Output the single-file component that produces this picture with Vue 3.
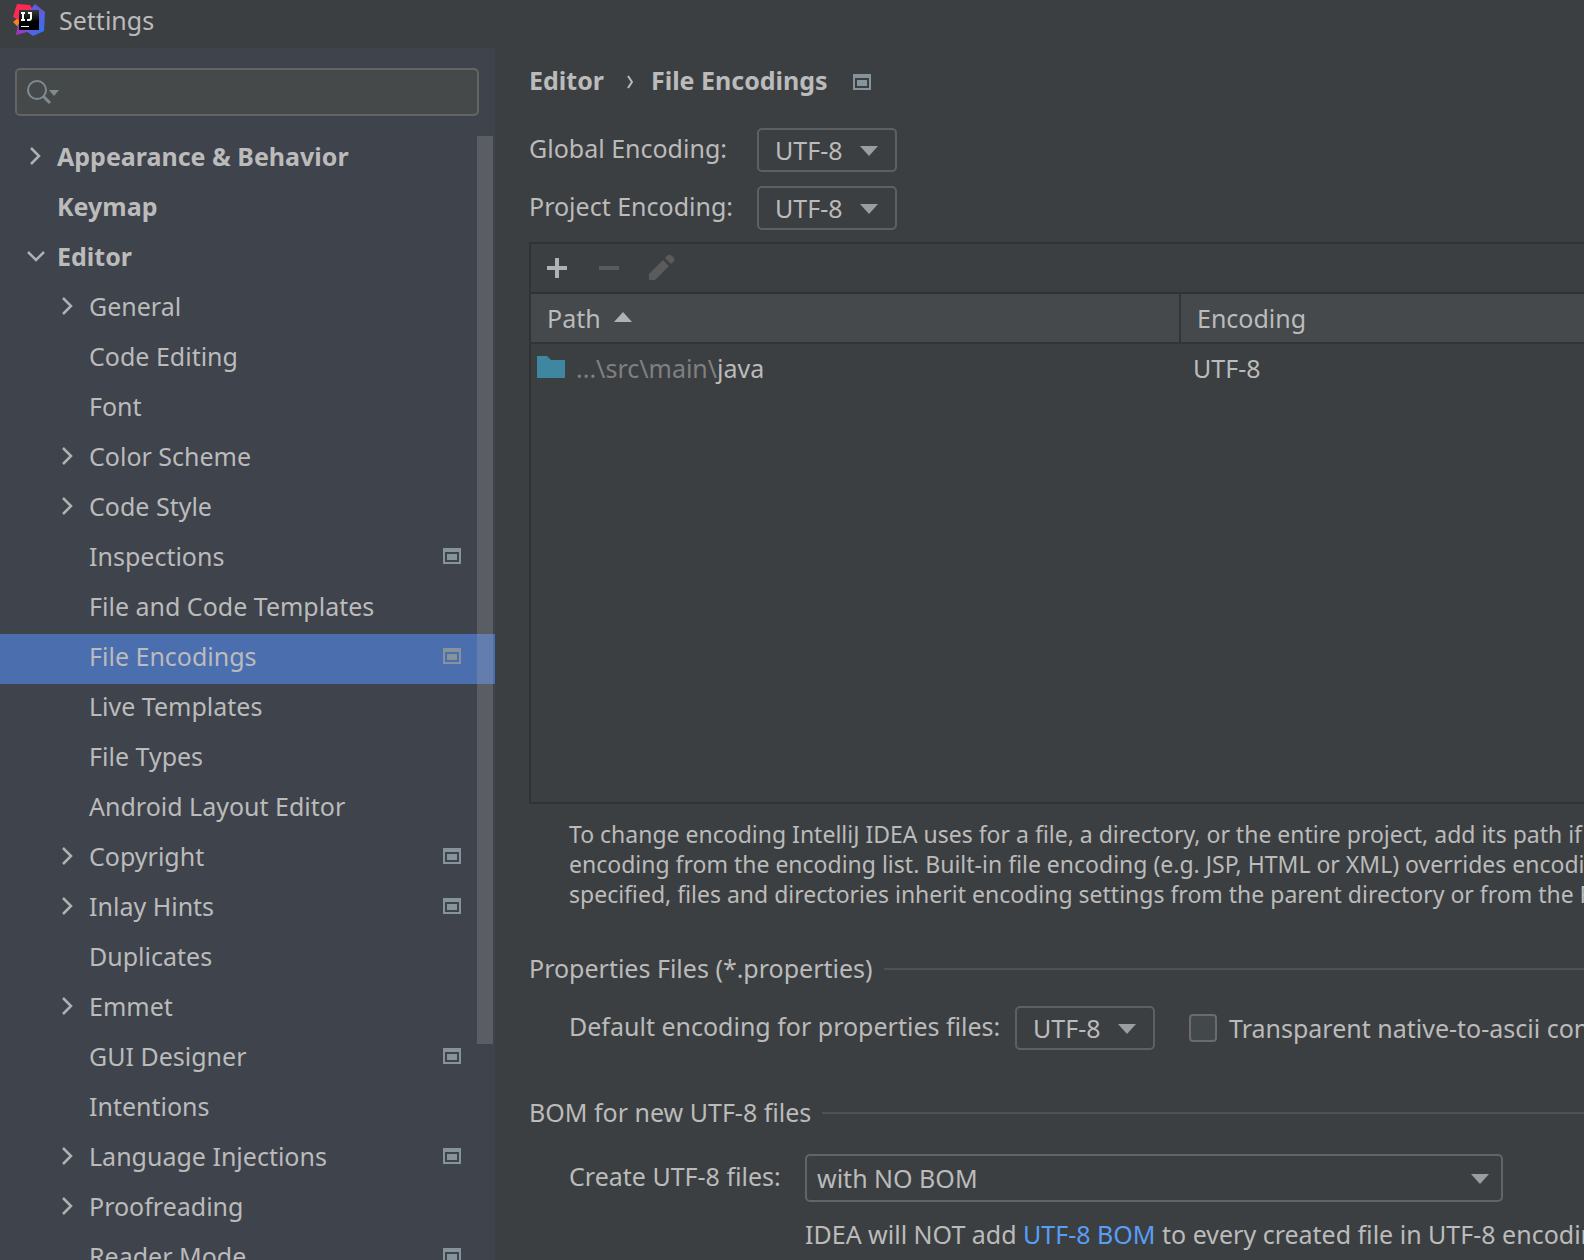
<script setup>
import { ref } from 'vue'

const query = ref('')
const globalEncoding = ref('UTF-8')
const projectEncoding = ref('UTF-8')
const propertiesEncoding = ref('UTF-8')
const bom = ref('with NO BOM')
const transparent = ref(false)
const encodings = ['UTF-8']
const bomOptions = ['with NO BOM']

const selected = ref('File Encodings')
const items = [
  { label: 'Appearance & Behavior', level: 0, arrow: 'closed' },
  { label: 'Keymap', level: 0 },
  { label: 'Editor', level: 0, arrow: 'open' },
  { label: 'General', level: 1, arrow: 'closed' },
  { label: 'Code Editing', level: 1 },
  { label: 'Font', level: 1 },
  { label: 'Color Scheme', level: 1, arrow: 'closed' },
  { label: 'Code Style', level: 1, arrow: 'closed' },
  { label: 'Inspections', level: 1, project: true },
  { label: 'File and Code Templates', level: 1 },
  { label: 'File Encodings', level: 1, project: true },
  { label: 'Live Templates', level: 1 },
  { label: 'File Types', level: 1 },
  { label: 'Android Layout Editor', level: 1 },
  { label: 'Copyright', level: 1, arrow: 'closed', project: true },
  { label: 'Inlay Hints', level: 1, arrow: 'closed', project: true },
  { label: 'Duplicates', level: 1 },
  { label: 'Emmet', level: 1, arrow: 'closed' },
  { label: 'GUI Designer', level: 1, project: true },
  { label: 'Intentions', level: 1 },
  { label: 'Language Injections', level: 1, arrow: 'closed', project: true },
  { label: 'Proofreading', level: 1, arrow: 'closed' },
  { label: 'Reader Mode', level: 1, project: true },
]
</script>

<template>
  <div class="window">
    <header class="titlebar">
      <svg class="logo" viewBox="0 0 32 32" aria-hidden="true">
        <defs>
          <linearGradient id="lg-blue" x1="0" y1="0" x2="1" y2="1">
            <stop offset="0" stop-color="#3b6cf0" />
            <stop offset="0.45" stop-color="#6b57d8" />
            <stop offset="1" stop-color="#1f7cf5" />
          </linearGradient>
          <linearGradient id="lg-purple" x1="0" y1="1" x2="1" y2="0">
            <stop offset="0" stop-color="#b02fb0" />
            <stop offset="1" stop-color="#5c5be0" />
          </linearGradient>
          <linearGradient id="lg-black" x1="0" y1="0" x2="0" y2="1">
            <stop offset="0" stop-color="#3a3a3a" />
            <stop offset="0.6" stop-color="#000" />
          </linearGradient>
        </defs>
        <path d="M0 18 L6 13 L8 24 L4 22Z" fill="#fc801d" />
        <path d="M4 0 L17 1 L21 8 L6 16 L0 13Z" fill="#fe2857" />
        <path d="M3 31 L5 20 L16 24 L14 28Z" fill="url(#lg-purple)" />
        <path d="M22 0 L32 8 L31 27 L20 32 L13 27 L18 5Z" fill="url(#lg-blue)" />
        <rect x="6" y="6" width="20" height="20" fill="url(#lg-black)" />
        <path d="M8 8h4v2h-1v5h1v2H8v-2h1v-5H8zM15 8h4v6q0 3-3 3h-2v-2h2q1 0 1-1v-4h-2zM8 22h8v1H8z" fill="#fff" />
      </svg>
      <h1>Settings</h1>
    </header>

    <div class="body">
      <aside class="sidebar">
        <div class="search">
          <svg viewBox="0 0 34 26" aria-hidden="true">
            <circle cx="10" cy="11" r="9" fill="none" stroke="#7f8b91" stroke-width="2" />
            <path d="M16 17l7 7" stroke="#7f8b91" stroke-width="3" />
            <path d="M22 11h10l-5 6z" fill="#7f8b91" />
          </svg>
          <input v-model="query" type="text" aria-label="Search settings" />
        </div>

        <nav class="tree">
          <ul>
            <li v-for="item in items" :key="item.label">
              <button
                type="button"
                class="node"
                :class="{ child: item.level === 1, selected: item.label === selected }"
                @click="selected = item.label"
              >
                <span class="chevron">
                  <svg v-if="item.arrow === 'closed'" viewBox="0 0 18 18" aria-hidden="true"><path d="M4 1l8 8-8 8" /></svg>
                  <svg v-else-if="item.arrow === 'open'" viewBox="0 0 18 18" aria-hidden="true"><path d="M1 5l8 8 8-8" /></svg>
                </span>
                <span class="name">{{ item.label }}</span>
                <svg v-if="item.project" class="project" viewBox="0 0 18 16" aria-hidden="true">
                  <path fill-rule="evenodd" d="M0 0h18v16H0zM2 4v10h14V4zM4 6h10v6H4z" />
                </svg>
              </button>
            </li>
          </ul>
          <div class="thumb"></div>
        </nav>
      </aside>

      <main class="content">
        <div class="crumbs">
          <span>Editor</span>
          <svg class="sep" viewBox="0 0 6 14" aria-hidden="true"><path d="M1 1l4 6-4 6" /></svg>
          <span>File Encodings</span>
          <svg class="project" viewBox="0 0 18 16" aria-hidden="true">
            <path fill-rule="evenodd" d="M0 0h18v16H0zM2 4v10h14V4zM4 6h10v6H4z" />
          </svg>
        </div>

        <div class="fields">
          <label class="caption" for="global">Global Encoding:</label>
          <div class="combo">
            <select id="global" v-model="globalEncoding"><option v-for="e in encodings" :key="e">{{ e }}</option></select>
            <svg viewBox="0 0 18 10" aria-hidden="true"><path d="M0 0h18l-9 10z" /></svg>
          </div>
          <label class="caption" for="project">Project Encoding:</label>
          <div class="combo">
            <select id="project" v-model="projectEncoding"><option v-for="e in encodings" :key="e">{{ e }}</option></select>
            <svg viewBox="0 0 18 10" aria-hidden="true"><path d="M0 0h18l-9 10z" /></svg>
          </div>
        </div>

        <section class="paths">
          <div class="toolbar">
            <button type="button" aria-label="Add">
              <svg viewBox="0 0 28 28" aria-hidden="true"><path d="M12 4h4v8h8v4h-8v8h-4v-8H4v-4h8z" fill="#afb1b3" /></svg>
            </button>
            <button type="button" aria-label="Remove" disabled>
              <svg viewBox="0 0 28 28" aria-hidden="true"><path d="M4 12h20v4H4z" fill="#5b5b5b" /></svg>
            </button>
            <button type="button" aria-label="Edit" disabled>
              <svg viewBox="0 0 28 28" aria-hidden="true">
                <path d="M2 20L16 6l6 6L8 26H2zM18 4l3-3q2-1 4 1l2 2q1 2 0 3l-3 3z" fill="#5b5b5b" />
              </svg>
            </button>
          </div>
          <table>
            <thead>
              <tr>
                <th class="path-col">
                  Path
                  <svg class="sort" viewBox="0 0 18 10" aria-hidden="true"><path d="M0 10h18l-9-10z" /></svg>
                </th>
                <th>Encoding</th>
              </tr>
            </thead>
            <tbody>
              <tr>
                <td>
                  <svg class="folder" viewBox="0 0 28 22" aria-hidden="true"><path d="M0 0h10l4 4h14v18H0z" /></svg>
                  <span class="dim">...\src\main\</span>java
                </td>
                <td>UTF-8</td>
              </tr>
            </tbody>
          </table>
        </section>

        <p class="help">
          To change encoding IntelliJ IDEA uses for a file, a directory, or the entire project, add its path if necessary<br />
          encoding from the encoding list. Built-in file encoding (e.g. JSP, HTML or XML) overrides encoding<br />
          specified, files and directories inherit encoding settings from the parent directory or from the Project
        </p>

        <h2>Properties Files (*.properties)</h2>
        <div class="row properties">
          <label class="caption" for="properties">Default encoding for properties files:</label>
          <div class="combo">
            <select id="properties" v-model="propertiesEncoding"><option v-for="e in encodings" :key="e">{{ e }}</option></select>
            <svg viewBox="0 0 18 10" aria-hidden="true"><path d="M0 0h18l-9 10z" /></svg>
          </div>
          <label class="check"><input v-model="transparent" type="checkbox" />Transparent native-to-ascii conversion</label>
        </div>

        <h2>BOM for new UTF-8 files</h2>
        <div class="row bom">
          <label class="caption" for="bom">Create UTF-8 files:</label>
          <div class="combo large">
            <select id="bom" v-model="bom"><option v-for="b in bomOptions" :key="b">{{ b }}</option></select>
            <svg viewBox="0 0 18 10" aria-hidden="true"><path d="M0 0h18l-9 10z" /></svg>
          </div>
          <p class="note">IDEA will NOT add <a href="#">UTF-8 BOM</a> to every created file in UTF-8 encoding</p>
        </div>
      </main>
    </div>
  </div>
</template>

<style>
body {
  margin: 0;
  background: #3c3f41;
}
</style>

<style scoped>
.window {
  display: flex;
  flex-direction: column;
  height: 100vh;
  overflow: hidden;
  background: #3c3f41;
  color: #bbbbbb;
  font: 25px/36px "Noto Sans", "Open Sans", sans-serif;
  white-space: nowrap;
}
.window * {
  box-sizing: border-box;
}
svg {
  display: block;
  flex: none;
}
button,
input,
select {
  margin: 0;
  padding: 0;
  border: 0;
  background: none;
  color: inherit;
  font: inherit;
}
h1,
h2,
p,
ul {
  margin: 0;
  padding: 0;
  font-size: inherit;
  font-weight: 400;
}
.titlebar {
  display: flex;
  flex: none;
  align-items: center;
  gap: 14px;
  height: 48px;
  padding: 0 13px 8px;
}
.logo {
  width: 32px;
  height: 32px;
}
.body {
  display: flex;
  flex: 1;
  min-height: 0;
}
.sidebar {
  display: flex;
  flex: none;
  flex-direction: column;
  width: 495px;
  overflow: hidden;
  background: #3f434c;
}
.search {
  display: flex;
  flex: none;
  align-items: center;
  gap: 4px;
  height: 48px;
  margin: 20px 16px 18px 15px;
  padding: 0 10px;
  border: 2px solid #646464;
  border-radius: 5px;
  background: #45494a;
}
.search svg {
  width: 34px;
  height: 26px;
}
.search input {
  flex: 1;
  min-width: 0;
  outline: none;
}
.tree {
  position: relative;
}
.tree ul {
  list-style: none;
}
.node {
  display: flex;
  align-items: center;
  width: 100%;
  height: 50px;
  padding: 0 34px 6px 27px;
  font-weight: 700;
  text-align: left;
}
.node.child {
  padding-left: 59px;
  font-weight: 400;
}
.node.selected {
  background: #4b6eaf;
}
.chevron {
  width: 30px;
}
.chevron svg {
  width: 18px;
  height: 18px;
  fill: none;
  stroke: #afb1b3;
  stroke-width: 2.5;
}
.name {
  flex: 1;
}
.project {
  width: 18px;
  height: 16px;
  fill: #87939a;
}
.thumb {
  position: absolute;
  top: 2px;
  right: 2px;
  width: 16px;
  height: 908px;
  background: rgba(170, 170, 170, 0.26);
}
.content {
  display: flex;
  flex: 1;
  flex-direction: column;
  min-width: 0;
  padding: 16px 0 0 34px;
  overflow: hidden;
}
.crumbs {
  display: flex;
  align-items: center;
  height: 36px;
  margin-bottom: 28px;
  font-weight: 700;
}
.crumbs span,
.caption {
  padding-bottom: 4px;
}
.sep {
  width: 6px;
  height: 14px;
  margin: 0 18px 0 23px;
  fill: none;
  stroke: #bbbbbb;
  stroke-width: 2;
}
.crumbs .project {
  margin-left: 25px;
}
.fields {
  display: grid;
  grid-template-columns: 228px 140px;
  row-gap: 14px;
  align-items: center;
  margin-bottom: 12px;
}
.combo {
  position: relative;
  width: 140px;
}
.combo select {
  display: block;
  width: 100%;
  height: 44px;
  padding-left: 16px;
  border: 2px solid #5e6060;
  border-radius: 5px;
  appearance: none;
  outline: none;
}
.combo option {
  background: #3c3f41;
}
.combo svg {
  position: absolute;
  top: 18px;
  right: 19px;
  width: 18px;
  height: 10px;
  fill: #9a9da1;
  pointer-events: none;
}
.combo.large {
  width: 698px;
}
.combo.large select {
  height: 48px;
  padding-left: 10px;
  border-color: #646464;
}
.combo.large svg {
  top: 20px;
  right: 14px;
}
.paths {
  height: 562px;
  flex: none;
  border: 2px solid #323232;
  border-right: 0;
}
.toolbar {
  display: flex;
  align-items: center;
  gap: 24px;
  height: 50px;
  padding-left: 12px;
  border-bottom: 2px solid #323232;
}
.toolbar svg {
  width: 28px;
  height: 28px;
}
table {
  width: 100%;
  table-layout: fixed;
  border-collapse: separate;
  border-spacing: 0;
}
th,
td {
  height: 50px;
  padding: 0;
  font-weight: 400;
  text-align: left;
}
td {
  height: 48px;
}
thead {
  background: #45494b;
}
th {
  border-bottom: 2px solid #323537;
  padding-left: 16px;
}
th.path-col {
  width: 650px;
  border-right: 2px solid #323537;
}
.sort {
  display: inline-block;
  width: 18px;
  height: 10px;
  margin: 0 0 6px 7px;
  fill: #afb1b3;
}
td {
  padding-left: 12px;
}
td:first-child {
  padding-left: 6px;
}
.folder {
  display: inline-block;
  width: 28px;
  height: 22px;
  margin-right: 7px;
  fill: #3f87a1;
}
.dim {
  margin-left: 4px;
  color: #808080;
}
.help {
  margin: 15px 0 41px 40px;
  font-size: 23px;
  line-height: 30px;
}
h2 {
  display: flex;
  align-items: center;
  gap: 11px;
  height: 36px;
}
h2::after {
  content: "";
  flex: 1;
  height: 2px;
  margin-top: 2px;
  background: #515151;
}
.row {
  align-items: center;
  padding-left: 40px;
}
.properties {
  display: grid;
  grid-template-columns: 446px 174px 1fr;
  margin: 20px 0 44px;
}
.check {
  display: flex;
  align-items: center;
  gap: 12px;
}
.check input {
  flex: none;
  width: 28px;
  height: 28px;
  border: 2px solid #6b6b6b;
  border-radius: 4px;
  background: #43494a;
  appearance: none;
}
.check input:checked {
  background: #4b6eaf;
}
.bom {
  display: grid;
  grid-template-columns: 236px 1fr;
  row-gap: 14px;
  margin-top: 24px;
}
.note {
  grid-column: 2;
}
.note a {
  color: #589df6;
  text-decoration: none;
}
</style>
